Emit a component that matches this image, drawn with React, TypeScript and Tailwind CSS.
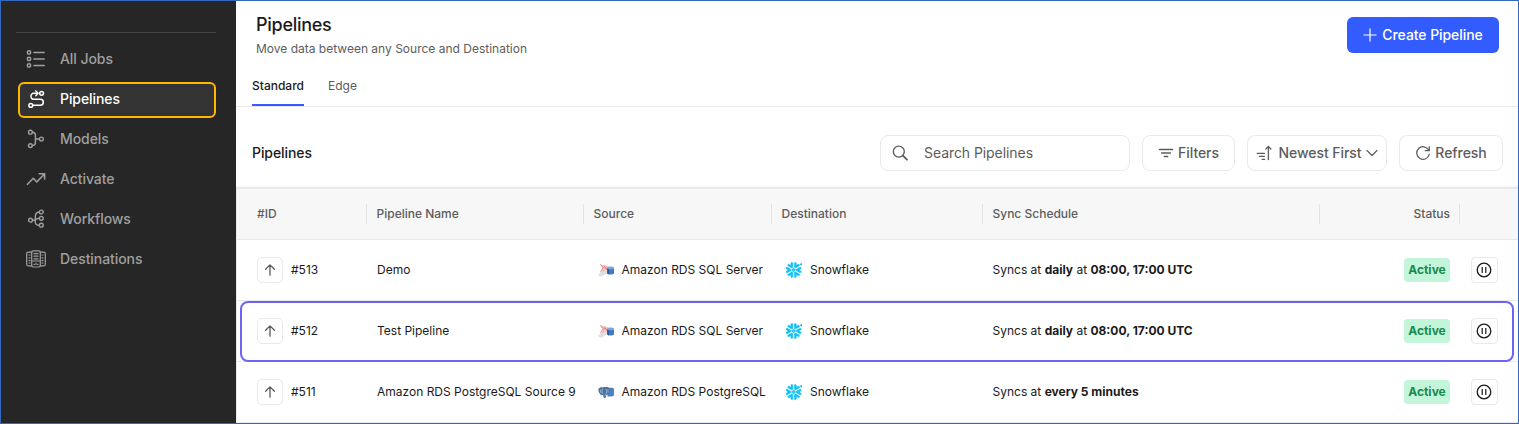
import type { ReactNode } from 'react';
import clsx from 'clsx';
import { SiSnowflake } from 'react-icons/si';

type Pipeline = {
  id: string;
  name: string;
  source: 'Amazon RDS SQL Server' | 'Amazon RDS PostgreSQL';
  destination: string;
  schedule: ReactNode;
  highlighted?: boolean;
};

const GRID = 'grid grid-cols-[130px_217px_188px_211px_337px_140px_58px]';

const JobsIcon = () => (
  <svg className="size-5" viewBox="0 0 20 20" fill="none" stroke="currentColor" strokeWidth="1.5" strokeLinecap="round">
    <circle cx="3" cy="3.5" r="1.7" />
    <circle cx="3" cy="10" r="1.7" />
    <circle cx="3" cy="16.5" r="1.7" />
    <path d="M8 3.5h10.2M8 10h10.2M8 16.5h10.2" />
  </svg>
);

const PipelinesIcon = () => (
  <svg className="size-5" viewBox="0 0 20 20" fill="none" stroke="currentColor" strokeWidth="1.5" strokeLinecap="round" strokeLinejoin="round">
    <circle cx="15.6" cy="4.3" r="1.9" />
    <circle cx="4.8" cy="16.4" r="1.9" />
    <path d="M11.5 4.3H7A3.2 3.2 0 0 0 7 10.3h7.3a3 3 0 0 1 0 6H7" />
    <path d="M9.8 1.9l2.3 2.4-2.3 2.4" />
  </svg>
);

const ModelsIcon = () => (
  <svg className="size-5" viewBox="0 0 20 20" fill="none" stroke="currentColor" strokeWidth="1.4" strokeLinecap="round">
    <circle cx="4.4" cy="3.2" r="1.9" />
    <circle cx="4.4" cy="16.6" r="1.9" />
    <circle cx="15.4" cy="10" r="1.9" />
    <path d="M6.4 3.2c2.4 0 3 .8 3 3v7.3c0 2.2-.6 3.1-3 3.1M9.4 10h4" />
  </svg>
);

const ActivateIcon = () => (
  <svg className="size-5" viewBox="0 0 20 20" fill="none" stroke="currentColor" strokeWidth="1.6" strokeLinecap="round" strokeLinejoin="round">
    <path d="M1.5 15.3l5.8-6 3.5 3.7 7.6-8M13.2 4.8h5.4v5.2" />
  </svg>
);

const WorkflowsIcon = () => (
  <svg className="size-5" viewBox="0 0 20 20" fill="none" stroke="currentColor" strokeWidth="1.4" strokeLinecap="round">
    <circle cx="15.3" cy="3" r="1.9" />
    <circle cx="15.3" cy="9.3" r="1.9" />
    <circle cx="15.3" cy="16.2" r="1.9" />
    <circle cx="4.5" cy="11.2" r="1.9" />
    <path d="M6.5 11.2h2.8M13.4 3c-3.2.2-4.1 2-4.1 5v5.2c0 2 .9 3 4.1 3M13.4 9.3c-2.6 0-3 .6-4 1.7" />
  </svg>
);

const DestinationsIcon = () => (
  <svg className="size-5" viewBox="0 0 20 20" fill="none" stroke="currentColor" strokeWidth="1.2" strokeLinecap="round" strokeLinejoin="round">
    <path d="M5.7 3.2H2.2c-.9 0-1.5.6-1.5 1.5v10.6c0 .9.6 1.5 1.5 1.5h3.5M14.3 3.2h3.5c.9 0 1.5.6 1.5 1.5v10.6c0 .9-.6 1.5-1.5 1.5h-3.5" />
    <rect x="5.7" y="1.8" width="8.6" height="16.2" rx="1.4" />
    <path d="M8 4.6h4M8 7.2h4M8 9.8h4M3 6h1M3 8.8h1M3 11.6h1M3 14h1M16 6h1M16 8.8h1M16 11.6h1M16 14h1M6 12h8M8 15.4h.4M11.6 15.4h.4M10 14v1.5" />
  </svg>
);

const SearchIcon = () => (
  <svg className="size-4" viewBox="0 0 16 16" fill="none" stroke="currentColor" strokeWidth="1.3" strokeLinecap="round">
    <circle cx="6.8" cy="6.6" r="5.5" />
    <path d="M10.9 10.7l4 4" strokeWidth="1.8" />
  </svg>
);

const FilterIcon = () => (
  <svg className="size-4" viewBox="0 0 16 16" fill="none" stroke="currentColor" strokeWidth="1.3" strokeLinecap="round">
    <path d="M1.4 4.5h13.2M3.6 8h8.8M6.3 11.5h3.4" />
  </svg>
);

const SortIcon = () => (
  <svg className="size-4" viewBox="0 0 16 16" fill="none" stroke="currentColor" strokeWidth="1.3" strokeLinecap="round" strokeLinejoin="round">
    <path d="M1.2 8.3h7.2M3.4 11.3h5M6.2 14.4h2.4M12.4 14.5V1.5M9.9 4l2.5-2.6L14.9 4" />
  </svg>
);

const RefreshIcon = () => (
  <svg className="size-4" viewBox="0 0 16 16" fill="none" stroke="currentColor" strokeWidth="1.25" strokeLinecap="round" strokeLinejoin="round">
    <path d="M14.2 9.4A6.3 6.3 0 1 1 13.6 5M14.3 1.6v4.1h-4" />
  </svg>
);

const SqlServerIcon = () => (
  <svg className="size-4" viewBox="0 0 16 16" fill="none">
    <path d="M.2 12.6C1.5 10.5 5 9 8.2 8l1.8 2.4-5.6 3.8c-1.8.9-4 .2-4.2-1.6z" fill="#dde1e7" />
    <path d="M1.8 2.2c2.9 1 5.5.8 8 2L13 6.5 8.6 8.2l-6.4 3C4 9.200 4.700 7.700 4.500 6z" fill="#f5c4c2" />
    <path d="M2.2 2.3l3.2 3.2 5.2 1.2M5.4 5.5L2.5 9.8M6.2 3.6l2.6 4" stroke="#e4817d" strokeWidth=".9" />
    <path d="M9.2 5.9v5.7c1.6 1.3 5.2 1.3 6.8 0V5.900z" fill="#4079c4" />
    <path d="M9.2 6.5v5.100c.5.500 1.100.700 1.800.800V6.500z" fill="#2b5590" />
    <ellipse cx="12.6" cy="5.9" rx="3.4" ry="1.3" fill="#7ba6dc" />
  </svg>
);

const PostgresIcon = () => (
  <svg className="size-4" viewBox="0 0 16 16" fill="none">
    <path d="M9.5 3.7h4.3c1.3 0 2.2.7 2.2 1.6v5.5c0 1-1.2 1.7-3 1.7H9.5z" fill="#4a82c6" />
    <path d="M.4 5C1.1 2.9 4 3 5.300 3.300c2-.8 6-.6 6.600 1.800.4 2.300-.8 4.200-1.700 5.400l-1.900.4-.4 2.600c-.8.800-2.300.6-2.500-.4l-.2-2.200-2 .4C1.500 10.100.1 7 .4 5z" fill="#47709a" />
    <path d="M4.7 4.4c-.8 1.700-.8 3.700.2 5.500M7.800 4.600c1.200 1.400 1 3.800.1 5.500l-1 2.300M2.200 5.400l1 4M10 5.200v3.500" stroke="#b8cbdd" strokeWidth=".7" />
  </svg>
);

const navItems = [
  { label: 'All Jobs', icon: JobsIcon },
  { label: 'Pipelines', icon: PipelinesIcon, active: true },
  { label: 'Models', icon: ModelsIcon },
  { label: 'Activate', icon: ActivateIcon },
  { label: 'Workflows', icon: WorkflowsIcon },
  { label: 'Destinations', icon: DestinationsIcon },
];

const columns = ['#ID', 'Pipeline Name', 'Source', 'Destination', 'Sync Schedule', 'Status'];

const twiceDaily = (
  <>
    Syncs at <b className="font-bold">daily</b> at <b className="font-bold">08:00, 17:00 UTC</b>
  </>
);

const pipelines: Pipeline[] = [
  { id: '#513', name: 'Demo', source: 'Amazon RDS SQL Server', destination: 'Snowflake', schedule: twiceDaily },
  { id: '#512', name: 'Test Pipeline', source: 'Amazon RDS SQL Server', destination: 'Snowflake', schedule: twiceDaily, highlighted: true },
  {
    id: '#511',
    name: 'Amazon RDS PostgreSQL Source 9',
    source: 'Amazon RDS PostgreSQL',
    destination: 'Snowflake',
    schedule: <>Syncs at <b className="font-bold">every 5 minutes</b></>,
  },
];

const Sidebar = () => (
  <aside className="w-[235px] shrink-0 bg-[#262626] pt-[31px]">
    <div className="ml-[15px] h-px w-[200px] bg-[#444444]" />
    <nav className="mt-[9px] ml-[17px] flex w-[198px] flex-col gap-1">
      {navItems.map(({ label, icon: Icon, active }) => (
        <a
          key={label}
          className={clsx(
            'flex h-9 items-center gap-3.5 rounded-[6px] border-2 px-1.5 pb-0.5 text-sm font-medium tracking-[-0.07px]',
            active ? 'border-[#ffb800] bg-[#333333] text-white' : 'border-transparent text-[#a0a0a0]'
          )}
        >
          <Icon />
          {label}
        </a>
      ))}
    </nav>
  </aside>
);

const ToolbarButton = ({ className, children }: { className: string; children: ReactNode }) => (
  <button className={clsx('flex h-9 items-center justify-center rounded-lg border border-[#e9e9e9] text-sm font-medium tracking-[-0.07px] text-[#5c5c5c]', className)}>
    {children}
  </button>
);

const PipelineRow = ({ pipeline }: { pipeline: Pipeline }) => (
  <div className={clsx(GRID, 'relative h-[61px] items-center border-b border-[#e9e9e9] text-xs text-[#1a1a1a]')}>
    <div className="flex items-center gap-2 pl-5">
      <span className="flex size-[26px] items-center justify-center rounded-[5px] border border-[#e9e9e9] text-[#5c5c5c]">
        <svg className="size-3.5" viewBox="0 0 14 14" fill="none" stroke="currentColor" strokeWidth="1.3" strokeLinecap="round" strokeLinejoin="round">
          <path d="M7 12.2V2.2M2.6 6.2L7 1.9l4.4 4.3" />
        </svg>
      </span>
      {pipeline.id}
    </div>
    <div className="pl-2.5 whitespace-nowrap">{pipeline.name}</div>
    <div className="flex items-center gap-2 pl-[13.5px] whitespace-nowrap">
      {pipeline.source === 'Amazon RDS SQL Server' ? <SqlServerIcon /> : <PostgresIcon />}
      {pipeline.source}
    </div>
    <div className="flex items-center gap-2 pl-3.5">
      <SiSnowflake className="size-4 stroke-[0.8] text-[#11c1f5]" />
      {pipeline.destination}
    </div>
    <div className="pl-[9.5px]">{pipeline.schedule}</div>
    <div className="flex justify-end pr-2.5">
      <span className="flex h-6 w-[46px] items-center justify-center rounded-[4px] bg-[#c3f5da] font-bold text-[#178a4c]">Active</span>
    </div>
    <div className="pl-[11px]">
      <span className="flex h-[26px] w-[27px] items-center justify-center rounded-[4px] border border-[#e9e9e9] pr-px">
        <svg className="size-4" viewBox="0 0 16 16" fill="none" stroke="currentColor" strokeWidth="1.3">
          <circle cx="8" cy="8" r="6.8" />
          <path d="M6.2 5v6M9.8 5v6" strokeWidth="1.2" />
        </svg>
      </span>
    </div>
    {pipeline.highlighted && (
      <div className="absolute -bottom-px left-[3px] right-1 top-0 rounded-lg border-2 border-[#6f63f6]" />
    )}
  </div>
);

const App = () => {
  return (
    <div className="flex h-[424px] w-[1519px] overflow-hidden border border-[#3468c0] bg-white font-['Inter',sans-serif]">
      <Sidebar />
      <main className="min-w-0 flex-1">
        {/* Page header */}
        <header className="flex h-[71px] justify-between pl-5 pr-[19px]">
          <div className="pt-2.5">
            <h1 className="text-lg leading-7 font-medium tracking-[-0.27px] text-[#1a1a1a]">Pipelines</h1>
            <p className="mt-0.5 text-xs text-[#5c5c5c]">Move data between any Source and Destination</p>
          </div>
          <button className="mt-4 flex h-9 w-[152px] items-center justify-center gap-[5px] rounded-[6px] bg-[#335cff] text-sm font-medium tracking-[-0.07px] text-white">
            <svg className="size-3.5" viewBox="0 0 14 14" stroke="currentColor" strokeWidth="1.2">
              <path d="M7 .5v13M.5 7h13" />
            </svg>
            Create Pipeline
          </button>
        </header>

        {/* Tabs */}
        <div className="flex h-[35px] gap-6 border-b border-[#e9e9e9] pl-4 text-xs">
          <div className="w-[52px] border-b-2 border-[#335cff] pt-1.5 font-medium text-[#1a1a1a]">Standard</div>
          <div className="pt-1.5 text-[#5c5c5c]">Edge</div>
        </div>

        {/* Toolbar */}
        <div className="flex h-20 items-start justify-between pt-7 pr-[15px] pl-4">
          <h2 className="text-sm leading-9 font-medium tracking-[-0.07px] text-[#1a1a1a]">Pipelines</h2>
          <div className="flex gap-3">
            <div className="flex h-9 w-[250px] items-center gap-4 rounded-lg border border-[#e9e9e9] pl-[11px] text-sm tracking-[-0.07px] text-[#5c5c5c]">
              <SearchIcon />
              Search Pipelines
            </div>
            <ToolbarButton className="w-[93px] gap-1">
              <FilterIcon />
              Filters
            </ToolbarButton>
            <ToolbarButton className="w-[140px] gap-[7px]">
              <SortIcon />
              Newest First
              <svg className="-ml-0.5 size-3" viewBox="0 0 12 12" fill="none" stroke="currentColor" strokeWidth="1.2" strokeLinecap="round" strokeLinejoin="round">
                <path d="M1 3.5l5 5 5-5" />
              </svg>
            </ToolbarButton>
            <ToolbarButton className="w-[104px] gap-1">
              <RefreshIcon />
              Refresh
            </ToolbarButton>
          </div>
        </div>

        {/* Pipelines table */}
        <section className="border-t-2 border-l border-[#e9e9e9] shadow-[0_-1px_2px_rgba(0,0,0,0.04)]">
          <div className={clsx(GRID, 'h-[51px] items-center border-b border-[#e9e9e9] bg-[#f7f7f7] text-xs font-medium text-[#5c5c5c]')}>
            {columns.map((column, index) => (
              <div
                key={column}
                className={clsx(
                  'flex h-5 items-center border-r border-[#e4e4e4]',
                  index === 0 ? 'pl-5' : 'pl-[9.5px]',
                  column === 'Status' && 'justify-end pr-[9px]'
                )}
              >
                {column}
              </div>
            ))}
          </div>
          {pipelines.map((pipeline) => (
            <PipelineRow key={pipeline.id} pipeline={pipeline} />
          ))}
        </section>
      </main>
    </div>
  );
};

export default App;
